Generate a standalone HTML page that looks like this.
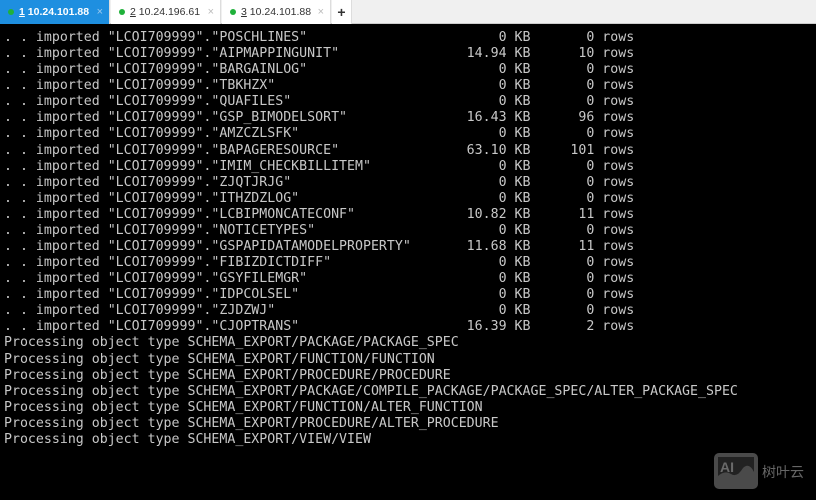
<!DOCTYPE html>
<html><head><meta charset="utf-8"><style>
*{margin:0;padding:0;box-sizing:border-box}
body{width:816px;height:500px;background:#000;overflow:hidden;position:relative;font-family:"DejaVu Sans Mono","Liberation Mono",monospace}
.tabs{position:absolute;left:0;top:0;width:816px;height:24px;background:#f0f0f0;border-bottom:1px solid #ccc;font-family:"Liberation Sans",sans-serif;font-size:10.5px}
.tab{position:absolute;top:0;height:24px;background:#fff;border-right:1px solid #ddd;color:#333;line-height:24px}
.tab .d{position:absolute;left:8px;top:9px;width:6px;height:6px;border-radius:50%;background:#1fb13a}
.tab .t{position:absolute;left:19px}
.tab .x{position:absolute;right:6px;color:#bbb;font-size:11px}
.tab.on{background:#1e8fe0;color:#fff;font-weight:bold}
.tab.on .x{color:#9cc9ee;font-weight:normal}
.term{position:absolute;left:4px;top:30px;font-size:13.25px;color:#c8c8c8}
.l{position:relative;height:16.08px;line-height:16px;white-space:pre}
</style></head><body>
<div class="tabs">
<div class="tab on" style="left:0;width:110px"><i class="d"></i><span class="t"><u>1</u> 10.24.101.88</span><span class="x">×</span></div>
<div class="tab" style="left:111px;width:110px"><i class="d"></i><span class="t"><u>2</u> 10.24.196.61</span><span class="x">×</span></div>
<div class="tab" style="left:222px;width:109px"><i class="d"></i><span class="t"><u>3</u> 10.24.101.88</span><span class="x">×</span></div>
<div class="tab" style="left:332px;width:20px;text-align:center;font-size:14px;font-weight:bold">+</div>
</div>
<div class="term" id="t"></div>
<script>
var rows=[["POSCHLINES","0","0"],["AIPMAPPINGUNIT","14.94","10"],["BARGAINLOG","0","0"],["TBKHZX","0","0"],["QUAFILES","0","0"],["GSP_BIMODELSORT","16.43","96"],["AMZCZLSFK","0","0"],["BAPAGERESOURCE","63.10","101"],["IMIM_CHECKBILLITEM","0","0"],["ZJQTJRJG","0","0"],["ITHZDZLOG","0","0"],["LCBIPMONCATECONF","10.82","11"],["NOTICETYPES","0","0"],["GSPAPIDATAMODELPROPERTY","11.68","11"],["FIBIZDICTDIFF","0","0"],["GSYFILEMGR","0","0"],["IDPCOLSEL","0","0"],["ZJDZWJ","0","0"],["CJOPTRANS","16.39","2"]];
var h="";
function sp(n){return " ".repeat(n)}
rows.forEach(function(r){
 var left='. . imported "LCOI709999"."'+r[0]+'"';
 var s=left+sp(63-left.length-r[1].length)+r[1]+" KB"+sp(8-r[2].length)+r[2]+" rows";
 h+='<div class="l">'+s+'</div>';
});
["PACKAGE/PACKAGE_SPEC","FUNCTION/FUNCTION","PROCEDURE/PROCEDURE","PACKAGE/COMPILE_PACKAGE/PACKAGE_SPEC/ALTER_PACKAGE_SPEC","FUNCTION/ALTER_FUNCTION","PROCEDURE/ALTER_PROCEDURE","VIEW/VIEW"].forEach(function(p){
 h+='<div class="l">Processing object type SCHEMA_EXPORT/'+p+'</div>';
});
document.getElementById("t").innerHTML=h;
</script>
<svg style="position:absolute;left:713px;top:452px" width="46" height="38" viewBox="0 0 46 38">
<rect x="1" y="1" width="44" height="36" rx="5" fill="#4a4a4a"/>
<rect x="5" y="5" width="36" height="28" fill="#222"/>
<path d="M5 33 L5 24 Q12 18 18 22 Q24 26 30 16 Q36 10 41 20 L41 33 Z" fill="#4a4a4a"/>
<text x="7" y="20" font-family="Liberation Sans,sans-serif" font-weight="bold" font-size="14" fill="#6a6a6a">AI</text>
</svg>
<div style="position:absolute;left:762px;top:462px;font-family:'Liberation Sans','Noto Sans CJK SC',sans-serif;font-size:14px;color:#666">树叶云</div>
</body></html>
